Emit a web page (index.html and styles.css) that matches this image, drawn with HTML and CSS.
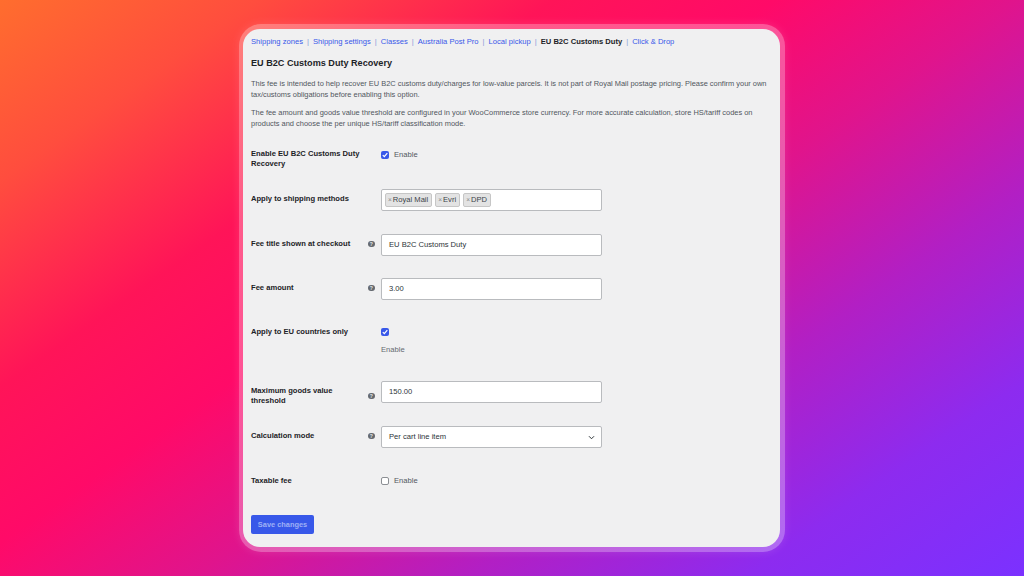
FILE: index.html
```html
<!DOCTYPE html>
<html>
<head>
<meta charset="utf-8">
<link rel="stylesheet" href="styles.css">
</head>
<body>
<div class="frame">
  <div class="card">
    <nav class="subnav">
      <a>Shipping zones</a><span class="sep">|</span><a>Shipping settings</a><span class="sep">|</span><a>Classes</a><span class="sep">|</span><a>Australia Post Pro</a><span class="sep">|</span><a>Local pickup</a><span class="sep">|</span><span class="current">EU B2C Customs Duty</span><span class="sep">|</span><a>Click &amp; Drop</a>
    </nav>
    <h2 class="title">EU B2C Customs Duty Recovery</h2>
    <p class="intro intro-1">This fee is intended to help recover EU B2C customs duty/charges for low-value parcels. It is not part of Royal Mail postage pricing. Please confirm your own tax/customs obligations before enabling this option.</p>
    <p class="intro intro-2">The fee amount and goods value threshold are configured in your WooCommerce store currency. For more accurate calculation, store HS/tariff codes on products and choose the per unique HS/tariff classification mode.</p>

    <div class="form">
      <div class="row">
        <div class="th">Enable EU B2C Customs Duty Recovery</div>
        <div class="tip"></div>
        <div class="td">
          <label class="cb"><span class="box checked"><svg viewBox="0 0 8 8" width="8" height="8"><path d="M1.8 4.2 L3.3 5.7 L6.3 2.2" fill="none" stroke="#fff" stroke-width="1.2"/></svg></span>Enable</label>
        </div>
      </div>

      <div class="row row-multi">
        <div class="th">Apply to shipping methods</div>
        <div class="tip"></div>
        <div class="td">
          <div class="multi">
            <span class="chip"><span class="x">×</span>Royal Mail</span>
            <span class="chip"><span class="x">×</span>Evri</span>
            <span class="chip"><span class="x">×</span>DPD</span>
          </div>
        </div>
      </div>

      <div class="row">
        <div class="th">Fee title shown at checkout</div>
        <div class="tip"><span class="help">?</span></div>
        <div class="td"><div class="input">EU B2C Customs Duty</div></div>
      </div>

      <div class="row">
        <div class="th">Fee amount</div>
        <div class="tip"><span class="help">?</span></div>
        <div class="td"><div class="input">3.00</div></div>
      </div>

      <div class="row row-eu">
        <div class="th">Apply to EU countries only</div>
        <div class="tip"></div>
        <div class="td">
          <label class="cb cb-eu"><span class="box checked"><svg viewBox="0 0 8 8" width="8" height="8"><path d="M1.8 4.2 L3.3 5.7 L6.3 2.2" fill="none" stroke="#fff" stroke-width="1.2"/></svg></span></label>
          <p class="desc">Enable</p>
        </div>
      </div>

      <div class="row">
        <div class="th">Maximum goods value threshold</div>
        <div class="tip tip-2"><span class="help">?</span></div>
        <div class="td"><div class="input">150.00</div></div>
      </div>

      <div class="row">
        <div class="th">Calculation mode</div>
        <div class="tip"><span class="help">?</span></div>
        <div class="td">
          <div class="input select">Per cart line item
            <svg class="chev" viewBox="0 0 8 6" width="7" height="5"><path d="M1 1.5 L4 4.5 L7 1.5" fill="none" stroke="#2c3338" stroke-width="1.2"/></svg>
          </div>
        </div>
      </div>

      <div class="row">
        <div class="th th-tax">Taxable fee</div>
        <div class="tip"></div>
        <div class="td">
          <label class="cb"><span class="box"></span>Enable</label>
        </div>
      </div>
    </div>

    <button class="save">Save changes</button>
  </div>
</div>
</body>
</html>
```

FILE: styles.css
```css
html, body {
  margin: 0;
  padding: 0;
}

body {
  width: 1024px;
  height: 576px;
  overflow: hidden;
  display: flex;
  align-items: center;
  justify-content: center;
  background: linear-gradient(145deg, #ff6d2e 0%, #ff4d3e 14%, #ff1458 30%, #ff0a68 42%, #e0148c 55%, #b21fc4 70%, #8d2bef 85%, #7b31ff 100%);
  font-family: "Liberation Sans", Arial, sans-serif;
}

.frame {
  width: 546px;
  height: 528px;
  box-sizing: border-box;
  padding: 5px 5px 5px 4px;
  border-radius: 22px;
  background: rgba(255, 255, 255, 0.3);
  box-shadow: 0 0 10px rgba(255, 255, 255, 0.12);
}

.card {
  height: 100%;
  box-sizing: border-box;
  background: #f0f0f1;
  border-radius: 17px;
  padding: 8px 3px 0 8px;
  color: #3c434a;
  font-size: 7.6px;
}

.subnav {
  line-height: 10px;
  height: 10px;
  white-space: nowrap;
}

.subnav a {
  color: #3858e9;
}

.subnav .sep {
  color: #8a9bd8;
  margin: 0 4px;
}

.subnav .current {
  color: #1d2327;
  font-weight: bold;
}

.title {
  margin: 10px 0 0;
  font-size: 9.1px;
  line-height: 12px;
  font-weight: bold;
  color: #1d2327;
}

.intro {
  margin: 0;
  font-size: 7.45px;
  line-height: 11px;
  color: #50575e;
}

.intro-1 {
  margin-top: 8.5px;
}

.intro-2 {
  margin-top: 7px;
}

.form {
  margin-top: 4.5px;
}

.row {
  display: grid;
  grid-template-columns: 114px 16px 221px;
  align-items: start;
  padding: 11px 0;
}

.row-multi {
  padding-bottom: 12px;
}

.th {
  margin-top: 5px;
  margin-bottom: -2px;
  line-height: 10px;
  font-weight: bold;
  color: #1d2327;
}

.th-tax {
  margin-top: 6px;
}

.tip {
  margin-top: 5px;
  height: 10px;
  display: flex;
  align-items: center;
  padding-left: 3px;
}

.tip-2 {
  margin-top: 10px;
}

.help {
  width: 6.5px;
  height: 6.5px;
  border-radius: 50%;
  background: #646970;
  color: #f0f0f1;
  font-size: 5px;
  font-weight: bold;
  line-height: 6.5px;
  text-align: center;
}

.td {
  min-height: 22px;
}

.cb {
  display: flex;
  align-items: center;
  gap: 5px;
  height: 10px;
  margin-top: 6px;
  color: #50575e;
  line-height: 10px;
}

.cb-eu {
  margin-top: 5px;
}

.box {
  width: 8px;
  height: 8px;
  box-sizing: border-box;
  border: 1px solid #8c8f94;
  border-radius: 2px;
  background: #fff;
  display: flex;
}

.box.checked {
  border: none;
  background: #3858e9;
}

.desc {
  margin: 8px 0 4px;
  line-height: 10px;
  color: #646970;
}

.input {
  position: relative;
  height: 22px;
  box-sizing: border-box;
  background: #fff;
  border: 1px solid #b9bbbe;
  border-radius: 2px;
  padding: 0 7px;
  line-height: 20px;
  color: #2c3338;
}

.chev {
  position: absolute;
  right: 6px;
  top: 8px;
}

.multi {
  height: 22px;
  box-sizing: border-box;
  background: #fff;
  border: 1px solid #b9bbbe;
  border-radius: 2px;
  padding: 0 3px;
  display: flex;
  align-items: center;
  gap: 3px;
}

.chip {
  height: 14px;
  box-sizing: border-box;
  background: #e3e3e3;
  border: 1px solid #c6c6c6;
  border-radius: 2px;
  padding: 0 3px 0 2px;
  line-height: 12px;
  color: #3c434a;
  display: flex;
  align-items: center;
}

.chip .x {
  color: #888;
  font-size: 6.5px;
  margin-right: 1px;
}

.save {
  display: block;
  margin-top: 12px;
  width: 63px;
  height: 19px;
  padding: 0;
  border: none;
  border-radius: 2px;
  background: #3858e9;
  color: #9eb0f6;
  font-family: "Liberation Sans", Arial, sans-serif;
  font-size: 7.4px;
  font-weight: bold;
}
```
